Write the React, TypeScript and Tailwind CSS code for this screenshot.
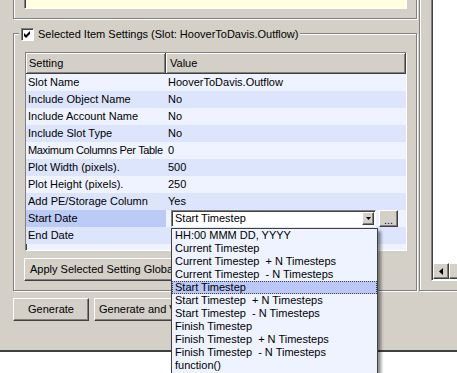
import React from "react";

const raised =
  "border border-t-white border-l-white border-r-[#404040] border-b-[#404040] shadow-[inset_-1px_-1px_0_#808080]";
const etched =
  "border border-[#808080] shadow-[inset_1px_1px_0_#fff,1px_1px_0_#fff]";
const sunken =
  "border border-t-[#808080] border-l-[#808080] border-r-white border-b-white shadow-[inset_1px_1px_0_#404040]";

const rows: [string, string][] = [
  ["Slot Name", "HooverToDavis.Outflow"],
  ["Include Object Name", "No"],
  ["Include Account Name", "No"],
  ["Include Slot Type", "No"],
  ["Maximum Columns Per Table", "0"],
  ["Plot Width (pixels).", "500"],
  ["Plot Height (pixels).", "250"],
  ["Add PE/Storage Column", "Yes"],
  ["Start Date", ""],
  ["End Date", ""],
];

const options = [
  "HH:00 MMM DD, YYYY",
  "Current Timestep",
  "Current Timestep  + N Timesteps",
  "Current Timestep  - N Timesteps",
  "Start Timestep",
  "Start Timestep  + N Timesteps",
  "Start Timestep  - N Timesteps",
  "Finish Timestep",
  "Finish Timestep  + N Timesteps",
  "Finish Timestep  - N Timesteps",
  "function()",
];

const Button = ({ label, className }: { label: string; className: string }) => (
  <div
    className={`${raised} bg-[#d4d0c8] h-[23px] flex items-center whitespace-nowrap overflow-hidden ${className}`}
  >
    {label}
  </div>
);

export default function App() {
  return (
    <div className="w-[457px] h-[373px] bg-white relative overflow-hidden text-black text-[11px] font-['Liberation_Sans',Arial,sans-serif]">
      <div className="flex h-[352px] bg-[#d4d0c8] border-b-2 border-[#404040] overflow-hidden">
        {/* left side: groups + buttons */}
        <div className="w-[417px] shrink-0 pl-[13px] flex flex-col">
          {/* notes group (cut off at top) */}
          <div
            className={`${etched} -mt-[20px] h-[39px] shrink-0 flex flex-col justify-end pb-[9px] pl-[10px] pr-[9px]`}
          >
            <div className={`${sunken} h-[20px] bg-[#ffffe1]`} />
          </div>

          {/* Selected item settings */}
          <div
            className={`${etched} relative mt-[14px] h-[258px] shrink-0 flex flex-col pl-[11px] pt-[18px] pr-[9px]`}
          >
            <div className="absolute left-[5px] -top-[6px] h-[13px] px-[2px] bg-[#d4d0c8] flex items-center gap-[4px] whitespace-nowrap">
              <div className="w-[13px] h-[13px] bg-white border border-t-[#808080] border-l-[#808080] border-r-white border-b-white shadow-[inset_1px_1px_0_#404040] flex items-center justify-center">
                <svg width="7" height="7" viewBox="0 0 7 7">
                  <path d="M0 2 L2 4 L6 0 L6 3 L2 7 L0 5 Z" fill="#000" />
                </svg>
              </div>
              <span>Selected Item Settings (Slot: HooverToDavis.Outflow)</span>
            </div>

            {/* grid */}
            <div className={`${sunken} h-[199px] shrink-0 bg-[#eff3ff] flex flex-col overflow-hidden`}>
              <div className="flex h-[21px] shrink-0 bg-[#d4d0c8]">
                <div className="w-[140px] h-full border-r border-b border-[#404040] shadow-[inset_1px_1px_0_#fff,inset_-1px_-1px_0_#808080] pl-[3px] flex items-center">
                  Setting
                </div>
                <div className="flex-1 h-full border-r border-b border-[#404040] shadow-[inset_1px_1px_0_#fff,inset_-1px_-1px_0_#808080] pl-[4px] flex items-center">
                  Value
                </div>
              </div>
              {rows.map(([name, value], i) => (
                <div
                  key={name}
                  className={`flex h-[17px] shrink-0 ${i % 2 ? "bg-[#dce5fc]" : "bg-[#eff3ff]"}`}
                >
                  <div
                    className={`w-[140px] pl-[2px] flex items-center whitespace-nowrap overflow-hidden ${name === "Start Date" ? "bg-[#bccaf6]" : ""} ${name.startsWith("Maximum") ? "tracking-[-0.35px]" : ""}`}
                  >
                    {name}
                  </div>
                  {name === "Start Date" ? (
                    <div className="flex-1 flex items-center pl-[5px]">
                      <div className={`${sunken} w-[205px] h-[17px] bg-white flex items-center pl-[3px] pr-[1px]`}>
                        <span className="flex-1 leading-[13px] h-[13px] overflow-hidden">Start Timestep</span>
                        <div className={`${raised} w-[12px] h-[13px] bg-[#d4d0c8] flex items-center justify-center`}>
                          <svg width="5" height="3" viewBox="0 0 5 3">
                            <path d="M0 0 H5 L2.5 3 Z" fill="#000" />
                          </svg>
                        </div>
                      </div>
                      <div className={`${raised} ml-[3px] w-[19px] h-[17px] bg-[#d4d0c8] flex items-end justify-center pb-[2px] leading-[8px] text-[#000040]`}>
                        ...
                      </div>
                    </div>
                  ) : (
                    <div className="flex-1 pl-[2px] flex items-center whitespace-nowrap">{value}</div>
                  )}
                </div>
              ))}
            </div>

            <Button label="Apply Selected Setting Globally" className="mt-[7px] -ml-[1px] w-[180px] pl-[5px]" />
          </div>

          <div className="flex mt-[7px] gap-[5px]">
            <Button label="Generate" className="w-[76px] justify-center" />
            <Button label="Generate and View" className="w-[110px] pl-[4px]" />
          </div>
        </div>

        {/* right side group */}
        <div className="flex-1 pl-[2px] flex flex-col">
          <div
            className={`${etched} -mt-[20px] h-[311px] w-[60px] shrink-0 pl-[11px] pb-[9px] flex flex-col justify-end`}
          >
            <div className={`${sunken} h-[301px] bg-white flex flex-col justify-end pl-[1px] pb-[1px]`}>
              <div className="flex h-[16px] bg-[#d4d0c8]">
                <div className={`${raised} w-[16px] h-[16px] bg-[#d4d0c8] flex items-center justify-center`}>
                  <svg width="4" height="7" viewBox="0 0 4 7">
                    <path d="M4 0 V7 L0 3.5 Z" fill="#000" />
                  </svg>
                </div>
                <div className={`${raised} w-[20px] h-[16px] bg-[#d4d0c8]`} />
              </div>
            </div>
          </div>
        </div>
      </div>

      {/* open drop-down list */}
      <div className="absolute left-[171px] top-[228px] w-[207px] h-[160px] bg-[#eef3ff] border border-[#404040] shadow-[3px_3px_3px_rgba(0,0,0,0.45)]">
        {options.map((o) => (
          <div
            key={o}
            className={`h-[13px] leading-[13px] pl-[3px] whitespace-pre ${o === "Start Timestep" ? "bg-[#b9c8f7] outline outline-1 outline-dotted outline-[#404040] -outline-offset-1" : ""}`}
          >
            {o}
          </div>
        ))}
      </div>
    </div>
  );
}
